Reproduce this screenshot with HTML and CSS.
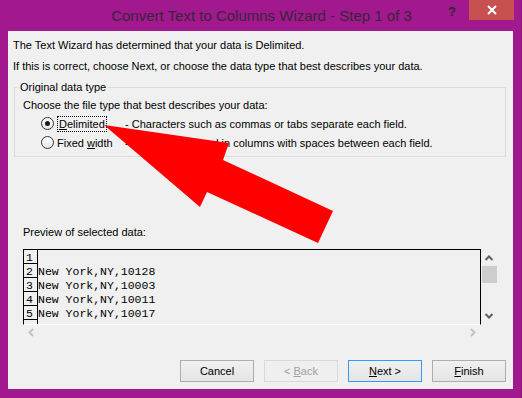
FILE: index.html
```html
<!DOCTYPE html>
<html lang="en">
<head>
    <meta charset="UTF-8">
    <title>Convert Text to Columns Wizard - Step 1 of 3</title>
    <link rel="stylesheet" href="styles.css">
</head>
<body>
    <div class="window">
        <div class="titlebar">
            <div class="title">Convert Text to Columns Wizard - Step 1 of 3</div>
            <div class="caption-buttons">
                <span class="help">?</span>
                <span class="close">
                    <svg width="10" height="10" viewBox="0 0 10 10"><path d="M1 1 L9 9 M9 1 L1 9" stroke="#fff" stroke-width="2"/></svg>
                </span>
            </div>
        </div>

        <div class="client">
            <p class="intro">The Text Wizard has determined that your data is Delimited.</p>
            <p class="intro">If this is correct, choose Next, or choose the data type that best describes your data.</p>

            <fieldset class="group">
                <legend>Original data type</legend>
                <p class="group-text">Choose the file type that best describes your data:</p>
                <div class="option">
                    <span class="radio checked"></span>
                    <span class="opt-label"><span class="focus"><u>D</u>elimited</span></span>
                    <span class="desc">- Characters such as commas or tabs separate each field.</span>
                </div>
                <div class="option">
                    <span class="radio"></span>
                    <span class="opt-label">Fixed <u>w</u>idth</span>
                    <span class="desc">- Fields are aligned in columns with spaces between each field.</span>
                </div>
            </fieldset>

            <div class="preview-label">Preview of selected data:</div>
            <div class="preview">
                <div class="rows">
                    <div class="row"><span class="num">1</span><span class="cell"></span></div>
                    <div class="row"><span class="num">2</span><span class="cell">New York,NY,10128</span></div>
                    <div class="row"><span class="num">3</span><span class="cell">New York,NY,10003</span></div>
                    <div class="row"><span class="num">4</span><span class="cell">New York,NY,10011</span></div>
                    <div class="row"><span class="num">5</span><span class="cell">New York,NY,10017</span></div>
                    <div class="row"><span class="num"></span><span class="cell"></span></div>
                </div>
                <div class="vscroll">
                    <svg class="chev" width="16" height="8" viewBox="0 0 16 8"><path d="M4.5 6 L8 2.5 L11.5 6" fill="none" stroke="#606060" stroke-width="2"/></svg>
                    <div class="thumb"></div>
                    <svg class="chev down" width="16" height="8" viewBox="0 0 16 8"><path d="M4.5 2 L8 5.5 L11.5 2" fill="none" stroke="#606060" stroke-width="2"/></svg>
                </div>
                <div class="hscroll">
                    <svg width="8" height="15" viewBox="0 0 8 15"><path d="M6 4 L2.5 7.5 L6 11" fill="none" stroke="#c2c2c2" stroke-width="2"/></svg>
                    <svg width="8" height="15" viewBox="0 0 8 15"><path d="M2 4 L5.5 7.5 L2 11" fill="none" stroke="#c2c2c2" stroke-width="2"/></svg>
                </div>
                <div class="corner"></div>
            </div>

            <div class="buttons">
                <button class="btn">Cancel</button>
                <button class="btn disabled">&lt; <u>B</u>ack</button>
                <button class="btn default"><u>N</u>ext &gt;</button>
                <button class="btn"><u>F</u>inish</button>
            </div>
        </div>

        <svg class="arrow" width="522" height="398" viewBox="0 0 522 398">
            <polygon points="104,125 229,143 223,160 333,211 318,243 207,192 200,207" fill="#ff0000"/>
        </svg>
    </div>
</body>
</html>
```

FILE: styles.css
```css
body {
    margin: 0;
    font-family: "Liberation Sans", Arial, sans-serif;
    font-size: 11px;
    color: #000;
    background: #a2188f;
}
.window {
    position: relative;
    width: 522px;
    height: 398px;
    background: #a2188f;
    box-sizing: border-box;
    border-right: 1px solid #8c1479;
    overflow: hidden;
}
.titlebar {
    position: relative;
    height: 31px;
}
.title {
    text-align: center;
    font-size: 15px;
    line-height: 31px;
    color: #362634;
    padding-left: 2px;
}
.caption-buttons {
    position: absolute;
    top: 0;
    right: 7px;
    display: flex;
    align-items: flex-start;
}
.help {
    font-size: 13px;
    font-weight: bold;
    color: #2a2a2a;
    line-height: 24px;
    margin-right: 13px;
}
.close {
    width: 45px;
    height: 20px;
    background: #c75050;
    display: flex;
    align-items: center;
    justify-content: center;
}
.client {
    margin: 0 8px 0 8px;
    height: 358px;
    background: #f0f0f0;
    box-sizing: border-box;
    padding-top: 4px;
}
.intro {
    margin: 0 0 0 5px;
    line-height: 21px;
}
.group {
    margin: 3px 7px 0 6px;
    padding: 0 0 4px 3px;
    border: 1px solid #dcdcdc;
    min-width: 0;
}
.group legend {
    padding: 0 2px;
    line-height: 15px;
}
.group-text {
    margin: 2px 0 0 5px;
    line-height: 17px;
}
.option {
    display: flex;
    align-items: center;
    height: 19px;
    padding-left: 23px;
}
.radio {
    width: 11px;
    height: 11px;
    border: 1px solid #333;
    border-radius: 50%;
    background: linear-gradient(#ffffff, #e6e6e6);
    display: flex;
    align-items: center;
    justify-content: center;
    flex: none;
}
.radio.checked::after {
    content: "";
    width: 5px;
    height: 5px;
    border-radius: 50%;
    background: #1a1a1a;
}
.opt-label {
    width: 68px;
    margin-left: 3px;
    flex: none;
}
.focus {
    display: inline-block;
    border: 1px dotted #000;
    padding: 0 1px;
    line-height: 14px;
}
.desc {
    white-space: nowrap;
}
.preview-label {
    margin: 68px 0 0 15px;
    line-height: 15px;
}
.preview {
    margin: 9px 0 0 15px;
    width: 474px;
    height: 91px;
    display: grid;
    grid-template-columns: 1fr 16px;
    grid-template-rows: 76px 15px;
}
.rows {
    border-top: 1px solid #000;
    border-left: 1px solid #000;
    border-right: 1px solid #000;
    border-bottom: 1px solid #fff;
    overflow: hidden;
    font-family: "Liberation Mono", "Courier New", monospace;
    font-size: 11.5px;
}
.row {
    display: flex;
    height: 14px;
    line-height: 15px;
}
.num {
    width: 11px;
    padding-left: 2px;
    border-right: 1px solid #000;
    border-bottom: 1px solid #000;
    flex: none;
}
.cell {
    white-space: nowrap;
}
.vscroll {
    display: flex;
    flex-direction: column;
    align-items: center;
}
.chev {
    margin-top: 5px;
}
.chev.down {
    margin-top: auto;
    margin-bottom: 5px;
}
.thumb {
    width: 15px;
    height: 17px;
    margin-top: 4px;
    margin-left: 1px;
    background: #cdcdcd;
}
.hscroll {
    display: flex;
    justify-content: space-between;
    padding: 0 4px 0 4px;
}
.buttons {
    display: flex;
    justify-content: flex-end;
    gap: 10px;
    margin-top: 20px;
    padding-right: 7px;
}
.btn {
    width: 74px;
    height: 22px;
    font-family: "Liberation Sans", Arial, sans-serif;
    font-size: 11px;
    color: #000;
    border: 1px solid #adadad;
    background: linear-gradient(#f0f0f0, #e5e5e5);
    padding: 0;
}
.btn.disabled {
    color: #a0a0a0;
    border-color: #d9d9d9;
    background: #efefef;
}
.btn.default {
    border-color: #3399ff;
}
.arrow {
    position: absolute;
    top: 0;
    left: 0;
    pointer-events: none;
}
```
